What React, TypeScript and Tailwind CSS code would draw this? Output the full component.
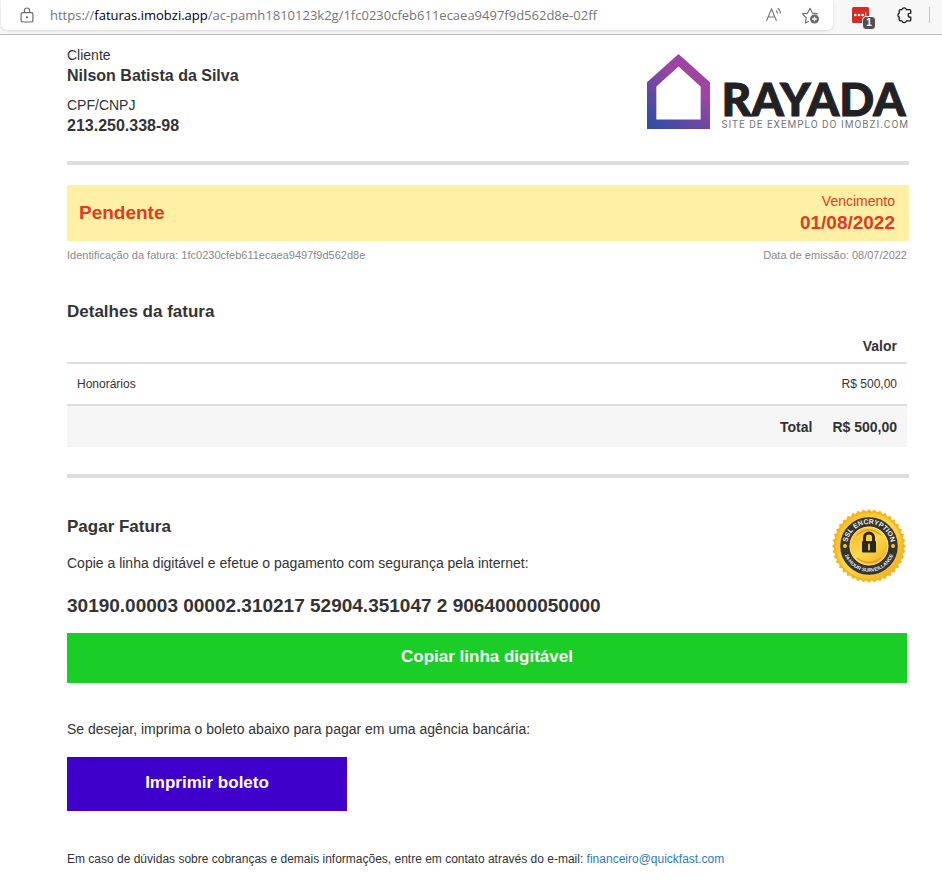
interface InvoiceItem {
  description: string;
  amount: string;
}

const ITEMS: InvoiceItem[] = [{ description: "Honorários", amount: "R$ 500,00" }];

// outline of the gold seal, one tooth every 9 degrees
const SEAL_POINTS = Array.from({ length: 80 }, (_, i) => {
  const r = i % 2 === 0 ? 37 : 34.6;
  const a = (i * Math.PI) / 40;
  return `${(38 + r * Math.cos(a)).toFixed(2)},${(38 + r * Math.sin(a)).toFixed(2)}`;
}).join(" ");

function BrowserBar() {
  return (
    <header className="flex h-[35px] items-start border-b border-[#bfbfbf] bg-[#f7f7f7]">
      <div className="ml-px flex h-[30px] min-w-0 flex-1 items-center rounded-b-md bg-white pr-3 pl-[19px] shadow-sm">
        <button aria-label="Informações do site" className="shrink-0">
          <svg width="14" height="16" viewBox="0 0 14 16" fill="none" stroke="#6b6b6b" strokeWidth="1.2">
            <rect x="1.1" y="5.6" width="11.8" height="9.4" rx="1.6" />
            <path d="M4.4 5.6V3.6a2.6 2.6 0 0 1 5.2 0v2" />
            <circle cx="7" cy="10.3" r="0.5" fill="#6b6b6b" />
          </svg>
        </button>
        <div
          role="textbox"
          aria-label="Endereço"
          contentEditable
          suppressContentEditableWarning
          spellCheck={false}
          className="ml-4 min-w-0 flex-1 truncate font-['Open_Sans','Noto_Sans',sans-serif] text-[13px] leading-5 text-[#767676]"
        >
          https://<span className="text-black">faturas.imobzi.app</span>
          /ac-pamh1810123k2g/1fc0230cfeb611ecaea9497f9d562d8e-02ff
        </div>
        <button aria-label="Ler em voz alta" className="shrink-0">
          <svg width="18" height="18" viewBox="0 0 18 18" fill="none" stroke="#767676" strokeWidth="1.1">
            <path d="M1.5 15 6.500 3l5 12M3.300 11h6.400" />
            <path d="M11 4.500c1 .7 1.500 1.800 1.500 3.300M12.700 2.200c1.800 1.200 2.700 3 2.700 5.400" />
          </svg>
        </button>
        <button aria-label="Adicionar aos favoritos" className="ml-[18px] shrink-0">
          <svg width="20" height="20" viewBox="0 0 20 20" fill="none" stroke="#6b6b6b" strokeWidth="1.1" strokeLinejoin="round">
            <path d="M8 16.200 4.300 18l.9-5.300L1.300 8.900l5.300-.8L9 3.300l2.400 4.800 5.300.8" />
            <circle cx="13.500" cy="14" r="4.500" fill="#6b6b6b" stroke="none" />
            <path d="M13.500 11.700v4.600M11.200 14h4.600" stroke="#fff" strokeWidth="1.300" />
          </svg>
        </button>
      </div>
      <div className="flex h-[30px] shrink-0 items-center pr-3 pl-[19px]">
        <button aria-label="Gerenciador de senhas" className="relative">
          <svg width="17" height="17" viewBox="0 0 17 17">
            <rect width="17" height="16" rx="1.500" fill="#d32d27" />
            <circle cx="3.300" cy="8" r="1.300" fill="#fff" />
            <circle cx="7" cy="8" r="1.300" fill="#fff" />
            <circle cx="10.700" cy="8" r="1.300" fill="#fff" />
            <path d="M13.700 5.500v5" stroke="#fff" />
          </svg>
          <span className="absolute top-[9px] left-2.5 flex h-3.5 w-3.5 items-center justify-center rounded-sm border border-[#f7f7f7] bg-[#505050] font-['Liberation_Sans',Arial,sans-serif] text-[10px] leading-3 font-bold text-white">
            1
          </span>
        </button>
        <button aria-label="Extensões" className="ml-7">
          <svg width="16" height="18" viewBox="0 0 16 18" fill="none" stroke="#1b1b1b" strokeWidth="1.300" strokeLinejoin="round">
            <path d="M5 3.600a2.200 2.200 0 0 1 4.300 0h3.300q1.200 0 1.200 1.200v2.400h-.6a2 2 0 0 0 0 4h.6v2.500q0 1.200-1.200 1.200H9.300a2.200 2.200 0 0 1-4.300 0H3.400q-1.200 0-1.200-1.200v-2.500a2.200 2.200 0 0 1 0-4V4.800q0-1.200 1.200-1.200Z" />
          </svg>
        </button>
        <span className="ml-4 h-4 w-px bg-[#c4c4c4]" />
      </div>
    </header>
  );
}

function Logo() {
  return (
    <div className="flex items-end">
      <svg width="63" height="75" viewBox="0 0 64 76" role="img" aria-label="Rayada">
        <defs>
          <linearGradient id="house" x1="0.650" y1="0.350" x2="0.200" y2="1">
            <stop offset="0" stopColor="#a044a4" />
            <stop offset="1" stopColor="#344da2" />
          </linearGradient>
        </defs>
        <path
          fill="url(#house)"
          fillRule="evenodd"
          d="M32 0 64 28.500V76H0V28.500ZM32 12.500 9.500 33V66.500H54.500V33Z"
        />
      </svg>
      <div className="ml-3 flex flex-col">
        <span className="font-['Lato',sans-serif] text-[46px] leading-[44px] font-black text-[#222225] [-webkit-text-stroke:1px_#222225]">
          RAYADA
        </span>
        <span className="font-['Roboto',sans-serif] text-[10px] leading-[8px] tracking-widest whitespace-nowrap text-[#777]">
          SITE DE EXEMPLO DO IMOBZI.COM
        </span>
      </div>
    </div>
  );
}

function SslSeal() {
  return (
    <svg width="76" height="76" viewBox="0 0 76 76" className="shrink-0">
      <defs>
        <linearGradient id="gold" x1="0" y1="0" x2="1" y2="1">
          <stop offset="0" stopColor="#f5b81c" />
          <stop offset="0.500" stopColor="#fbd84e" />
          <stop offset="1" stopColor="#eda81a" />
        </linearGradient>
        <path id="sealTop" d="M16 38a22 22 0 0 1 44 0" />
        <path id="sealBottom" d="M12.200 38a25.800 25.800 0 0 0 51.600 0" />
      </defs>
      <polygon points={SEAL_POINTS} fill="#f4b720" />
      <circle cx="38" cy="38" r="33" fill="url(#gold)" />
      <circle cx="38" cy="38" r="24" fill="none" stroke="#343432" strokeWidth="9.500" />
      <circle cx="38" cy="38" r="19" fill="url(#gold)" stroke="#fbe083" />
      <path d="M26 27q12-10 24 0M26 50q12 9 24 0" fill="none" stroke="#e0a01c" strokeWidth="1.500" />
      <circle cx="14" cy="38" r="2" fill="#f5c433" />
      <circle cx="62" cy="38" r="2" fill="#f5c433" />
      <path d="M33.500 33v-3.500a4.500 4.500 0 0 1 9 0V33" fill="none" stroke="#292724" strokeWidth="3" />
      <rect x="31" y="33" width="14" height="11.500" rx="1" fill="#292724" />
      <path d="M38 36.500v5" stroke="#eebb2d" strokeWidth="2" strokeLinecap="round" />
      <g fill="#eee" fontFamily="Liberation Sans, Arial, sans-serif" fontWeight="700" textAnchor="middle">
        <text fontSize="7">
          <textPath href="#sealTop" startOffset="50%">SSL ENCRYPTION</textPath>
        </text>
        <text fontSize="5">
          <textPath href="#sealBottom" startOffset="50%">24-HOUR SURVEILLANCE</textPath>
        </text>
      </g>
    </svg>
  );
}

function ItemsTable() {
  return (
    <table className="mt-[7px] w-full border-collapse">
      <thead>
        <tr className="h-[34px] border-b-2 border-[#ddd] text-right text-[14px]">
          <th colSpan={3} className="px-2.5 font-bold">
            Valor
          </th>
        </tr>
      </thead>
      <tbody>
        {ITEMS.map((item) => (
          <tr key={item.description} className="h-[42px] border-b-2 border-[#ddd] text-[12px]">
            <td className="px-2.5">{item.description}</td>
            <td colSpan={2} className="px-2.5 text-right">
              {item.amount}
            </td>
          </tr>
        ))}
      </tbody>
      <tfoot>
        <tr className="h-[42px] bg-[#f5f5f5] text-right text-[14px] font-bold">
          <td colSpan={2} className="px-2.5">
            Total
          </td>
          <td className="w-px px-2.5 whitespace-nowrap">R$ 500,00</td>
        </tr>
      </tfoot>
    </table>
  );
}

export default function App() {
  return (
    <div className="min-h-screen bg-white font-['Liberation_Sans',Arial,sans-serif] text-[#333]">
      <BrowserBar />
      <main className="pt-2.5 pr-[33px] pb-6 pl-[67px] text-[14px] leading-5">
        <section className="flex items-start justify-between">
          <dl>
            <dt>Cliente</dt>
            <dd className="text-[16px] leading-[22px] font-bold">Nilson Batista da Silva</dd>
            <dt className="mt-2">CPF/CNPJ</dt>
            <dd className="text-[16px] leading-[22px] font-bold">213.250.338-98</dd>
          </dl>
          <div className="pt-[9px]">
            <Logo />
          </div>
        </section>

        <hr className="mt-6 border-t-4 border-[#ddd]" />

        <section className="mt-5 flex h-14 items-center justify-between bg-[#fff0a5] px-3 text-[#e23b22]">
          <strong className="text-[19px]">Pendente</strong>
          <div className="pr-0.5 text-right">
            <p>Vencimento</p>
            <strong className="block text-[19px] leading-6">01/08/2022</strong>
          </div>
        </section>
        <div className="mt-1 flex justify-between pr-0.5 text-[11px] text-[#888]">
          <span>Identificação da fatura: 1fc0230cfeb611ecaea9497f9d562d8e</span>
          <span>Data de emissão: 08/07/2022</span>
        </div>

        <section className="mt-[37px] pr-0.5">
          <h2 className="text-[17px] font-bold">Detalhes da fatura</h2>
          <ItemsTable />
        </section>

        <hr className="mt-[27px] border-t-4 border-[#ddd]" />

        <section className="mt-[30px] pr-0.5">
          <div className="flex items-start justify-between">
            <div className="pt-[9px]">
              <h2 className="text-[17px] font-bold">Pagar Fatura</h2>
              <p className="mt-4">
                Copie a linha digitável e efetue o pagamento com segurança pela internet:
              </p>
            </div>
            <SslSeal />
          </div>
          <p className="mt-3 text-[19px] font-bold">
            30190.00003 00002.310217 52904.351047 2 90640000050000
          </p>
          <button className="mt-[17px] h-[50px] w-full bg-[#1acd27] pb-0.5 text-[17px] font-bold text-white">
            Copiar linha digitável
          </button>
          <p className="mt-9">Se desejar, imprima o boleto abaixo para pagar em uma agência bancária:</p>
          <button className="mt-[18px] h-[54px] w-1/3 bg-[#4000cb] pb-0.5 text-[17px] font-bold text-white">
            Imprimir boleto
          </button>
        </section>

        <footer className="mt-[38px] text-[12px]">
          Em caso de dúvidas sobre cobranças e demais informações, entre em contato através do e-mail:{" "}
          <a href="mailto:financeiro@quickfast.com" className="text-[#337ab7]">
            financeiro@quickfast.com
          </a>
        </footer>
      </main>
    </div>
  );
}
